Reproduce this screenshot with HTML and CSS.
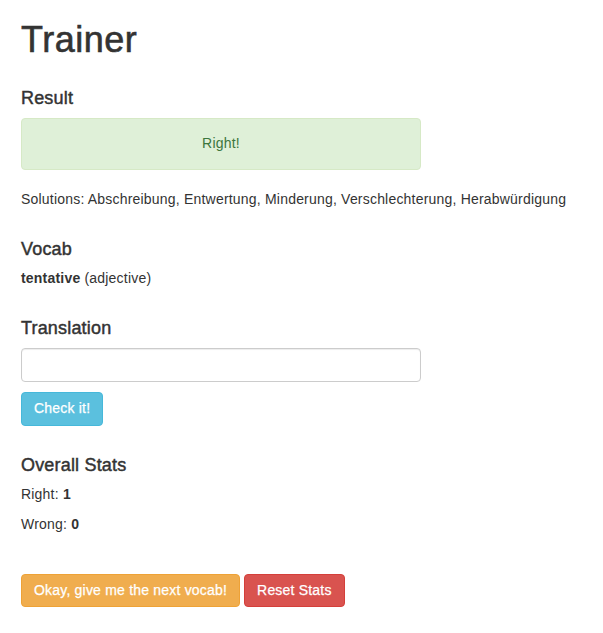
FILE: index.html
```html
<!DOCTYPE html>
<html lang="en">
<head>
<meta charset="utf-8">
<title>Trainer</title>
<link rel="stylesheet" href="styles.css">
</head>
<body>
<div class="page">
  <h1 class="title">Trainer</h1>

  <section class="block">
    <h4 class="heading">Result</h4>
    <div class="alert alert-success">Right!</div>
    <p class="text">Solutions: Abschreibung, Entwertung, Minderung, Verschlechterung, Herabwürdigung</p>
  </section>

  <section class="block">
    <h4 class="heading">Vocab</h4>
    <p class="text"><strong>tentative</strong> (adjective)</p>
  </section>

  <section class="block">
    <h4 class="heading">Translation</h4>
    <form class="check-form" onsubmit="return false;">
      <input class="form-control" type="text" aria-label="Translation">
      <div class="form-actions">
        <button class="btn btn-info" type="submit">Check it!</button>
      </div>
    </form>
  </section>

  <section class="block">
    <h4 class="heading">Overall Stats</h4>
    <p class="text">Right: <strong>1</strong></p>
    <p class="text">Wrong: <strong>0</strong></p>
  </section>

  <div class="actions">
    <button class="btn btn-warning" type="button">Okay, give me the next vocab!</button>
    <button class="btn btn-danger" type="button">Reset Stats</button>
  </div>
</div>
</body>
</html>
```

FILE: styles.css
```css
* {
  box-sizing: border-box;
}

html, body {
  margin: 0;
  padding: 0;
  background: #fff;
}

body {
  font-family: "Liberation Sans", Arial, Helvetica, sans-serif;
  font-size: 14px;
  line-height: 1.428571;
  letter-spacing: 0.2px;
  color: #333;
}

.page {
  padding: 0 15px 0 21px;
}

.title {
  margin: 20px 0 9px;
  font-size: 36px;
  line-height: 1.1;
  font-weight: 500;
  letter-spacing: 0.5px;
  -webkit-text-stroke: 0.6px #333;
}

.block {
  display: flow-root;
}

.heading {
  margin: 20px 0 10px;
  font-size: 18px;
  line-height: 19px;
  font-weight: 500;
  letter-spacing: 0.18px;
  -webkit-text-stroke: 0.45px #333;
}

.text {
  margin: 0 0 10px;
}

.text strong {
  font-weight: bold;
}

.alert {
  width: 400px;
  margin-bottom: 20px;
  padding: 15px;
  border: 1px solid transparent;
  border-radius: 4px;
  text-align: center;
}

.alert-success {
  color: #3c763d;
  background-color: #dff0d8;
  border-color: #d6e9c6;
}

.check-form {
  margin: 0 0 10px;
}

.form-control {
  display: block;
  width: 400px;
  height: 34px;
  margin: 0 0 10px;
  padding: 6px 12px;
  font-family: inherit;
  font-size: 14px;
  line-height: 1.428571;
  color: #555;
  background-color: #fff;
  border: 1px solid #ccc;
  border-radius: 4px;
  box-shadow: inset 0 1px 1px rgba(0, 0, 0, 0.075);
}

.form-actions {
  display: flex;
}

.btn {
  display: inline-block;
  margin: 0;
  padding: 6px 12px;
  font-family: inherit;
  font-size: 14px;
  font-weight: normal;
  line-height: 1.428571;
  letter-spacing: 0.2px;
  text-align: center;
  white-space: nowrap;
  color: #fff;
  -webkit-text-stroke: 0.25px #fff;
  border: 1px solid transparent;
  border-radius: 4px;
  cursor: pointer;
}

.btn-info {
  background-color: #5bc0de;
  border-color: #46b8da;
}

.btn-warning {
  background-color: #f0ad4e;
  border-color: #eea236;
}

.btn-danger {
  background-color: #d9534f;
  border-color: #d43f3a;
}

.actions {
  display: flex;
  gap: 4px;
  margin-top: 29px;
}
```
